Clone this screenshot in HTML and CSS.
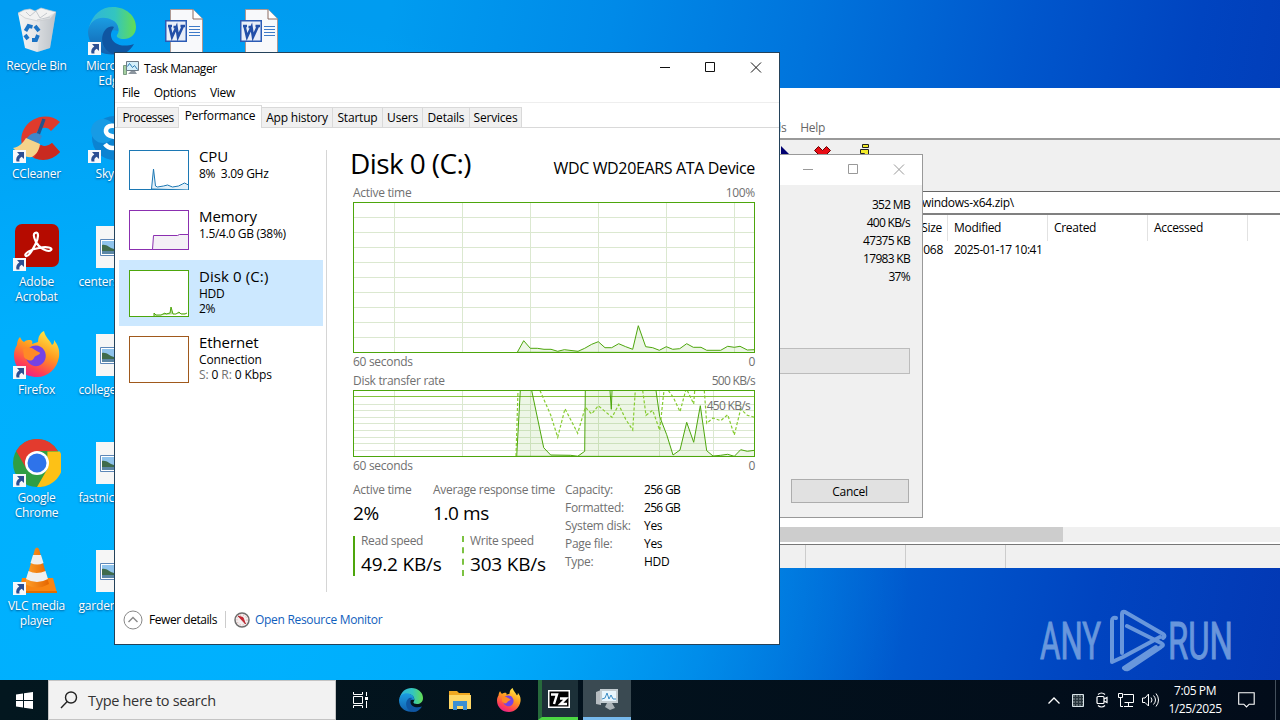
FILE: index.html
```
<!DOCTYPE html>
<html lang="en">
<head>
    <meta charset="utf-8">
    <title>Desktop</title>
    <link rel="stylesheet" href="styles.css">
</head>
<body>
    <svg class="defs" width="0" height="0">
        <defs>
            <linearGradient id="edgeBlue" x1="0" y1="0" x2="0" y2="1"><stop offset="0" stop-color="#1b9de2"/><stop offset="1" stop-color="#1260ae"/></linearGradient>
            <linearGradient id="edgeGreen" x1="0" y1="0" x2="1" y2="0"><stop offset="0" stop-color="#2fb4dc"/><stop offset=".55" stop-color="#33c5c0"/><stop offset="1" stop-color="#63dd52"/></linearGradient>
            <linearGradient id="fire" x1=".8" y1="0" x2=".3" y2="1"><stop offset="0" stop-color="#fff04a"/><stop offset=".45" stop-color="#ff9a1f"/><stop offset=".8" stop-color="#ff3f55"/><stop offset="1" stop-color="#e6218f"/></linearGradient>
            <linearGradient id="bin" x1="0" y1="0" x2="1" y2="0"><stop offset="0" stop-color="#f4f4f4"/><stop offset=".6" stop-color="#e0e2e5"/><stop offset="1" stop-color="#b6bcc4"/></linearGradient>
            <linearGradient id="cone" x1="0" y1="0" x2="1" y2="0"><stop offset="0" stop-color="#ffa12a"/><stop offset="1" stop-color="#e56500"/></linearGradient>
        </defs>
        <symbol id="shortcut" viewBox="0 0 13 13">
            <path d="M0 0h13v13H0z" fill="#f6f8fb"/>
            <path d="M4 2h7v7L8.700 6.800C6.500 8 6 9.500 6.500 11.500H3.500C2.600 8.400 3.800 6 6.300 4.400z" fill="#2c4f93"/>
        </symbol>
        <symbol id="edge" viewBox="0 0 48 48">
            <path d="M1 20C5 7 13 0 25 0c13 0 23 9 23 20 0 8-6 12-12 12-5 0-8-2-7-4 2-3 2-5 1-8-3-9-19-12-29 0z" fill="url(#edgeGreen)"/>
            <path d="M0 24C2 11 15 8 24 13c5 2 7 7 6 11-8-3-15 4-12 12 2 6 6 9 11 11C12 50 0 39 0 24z" fill="url(#edgeBlue)"/>
            <path d="M18 22c-8 9-3 24 11 26 7 0 13-4 17-11-12 4-22 0-23-8-.400-4 2-7 3-9-3-1-6 0-8 2z" fill="#0f56a2"/>
        </symbol>
        <symbol id="firefox" viewBox="0 0 46 46">
            <path d="M3 14c0-3 1-6 3-8 1 2 2 4 4 5 2-2 4-2 6-2 2 0 3 2 2 4l6-2c0-5 2-9 6-11 1 6 6 9 8 14 2-1 2-3 2-5 4 5 6 10 5 17-2 12-11 20-22 20C10 46 0 37 0 24c0-4 1-7 3-10z" fill="url(#fire)"/>
            <path d="M15 17c5-4 12-3 15 2 4 6 1 14-6 16-7 1-12-4-12-10l8-2c3 0 4-2 2-3z" fill="#7542e5"/>
            <path d="M9 18c4-2 8-2 12 1 3 2 5 2 5 3 0 2-5 2-6 5-2 4-7 3-10-1z" fill="#ff8a26"/>
        </symbol>
        <symbol id="word" viewBox="0 0 38 44">
            <path d="M5.500.500h22.500L37.500 10v34h-32z" fill="#f8f9fb" stroke="#b98a78" stroke-width=".8"/>
            <path d="M28 .500V10h9.500" fill="#fff" stroke="#8a6a60"/>
            <path d="M24 17.500h11M24 20.500h11M24 23.500h11M24 26.500h11" stroke="#3f7bc8"/>
            <path d="M0 11h22v22H0z" fill="#2b5bb5"/>
            <path d="M1.500 12.500h19v19h-19z" fill="#e9eef8"/>
            <path d="M4.500 17l2.500 11 4.500-10 1.500 10 5-11M3 17h4M8.500 18h4M15.500 17H20" fill="none" stroke="#234fa8" stroke-width="2.600"/>
        </symbol>
        <symbol id="photo" viewBox="0 0 33 42">
            <path d="M0 0h33v42H0z" fill="#f6f6f6"/>
            <path d="M4.500 13.500h26v16h-26z" fill="#fff" stroke="#5d87b8"/>
            <path d="M6 15h23v13H6z" fill="#8fc3ec"/>
            <path d="M6 19c5-1 7 3 12 4l11-1v3H6z" fill="#3f6b4c"/>
            <path d="M6 25h23v3H6z" fill="#5b86a5"/>
        </symbol>
        <symbol id="taskmgr" viewBox="0 0 16 14">
            <path d="M.500 4.500h3v9h-3z" fill="#a5cfa0" stroke="#7b9c82"/>
            <path d="M3.500.500h12v9h-12z" fill="#d3effb" stroke="#6d7b87"/>
            <path d="M4.500 5.500l2-3 3 4 2-2 3 4" fill="none" stroke="#2b7cb4"/>
            <path d="M8 10h4l2 3H5z" fill="#8c969f"/>
        </symbol>
    </svg>

    <div class="desktop">
        <div class="icons">
            <div class="icon">
                <svg width="48" height="48" viewBox="0 0 48 48">
                    <path d="M5 6l38-1-6 36-13 4-12-4z" fill="url(#bin)"/>
                    <path d="M5 6l6-3 6-1 5 2 6-3 7 2 8 2-6 7-12 2-13-3z" fill="#f2f2f2" stroke="#c5c8cc" stroke-width=".7"/>
                    <path d="M13 5l4 4 6-5 4 7 7-5M24 13l13-3" fill="none" stroke="#b9bec4" stroke-width=".8"/>
                    <path d="M27 14l16-9-6 36-12 4z" fill="#c5c9cf" opacity=".45"/>
                    <path d="M12.500 24l3-5 4 1M22 19l4 5M25 28l-2 5h-4M15 32l-3-4" fill="none" stroke="#1b73c5" stroke-width="3.800"/>
                </svg>
                <span>Recycle Bin</span>
            </div>
            <div class="icon">
                <svg width="48" height="48"><use href="#edge"/></svg>
                <svg class="arrow" width="13" height="13"><use href="#shortcut"/></svg>
                <span>Microsoft Edge</span>
            </div>
            <div class="icon word"><svg width="38" height="44"><use href="#word"/></svg></div>
            <div class="icon word"><svg width="38" height="44"><use href="#word"/></svg></div>

            <div class="icon">
                <svg width="48" height="48" viewBox="0 0 48 48">
                    <path d="M47 7C36-3 18 1 11 14c-7 13 0 28 14 30 8 1 16-1 22-7l-8-9c-5 5-13 4-15-2-3-6 0-12 6-13 3-1 6 0 8 3z" fill="#df3b2c"/>
                    <path d="M47 37l-8-9c-4 3-8 4-11 2l-7 13c9 4 19 2 26-6z" fill="#c92a20"/>
                    <path d="M31 4l-6 16" stroke="#25548c" stroke-width="3.500"/>
                    <path d="M15 22c4-5 10-5 14-1l-4 8-13-4z" fill="#3e87cb"/>
                    <path d="M13 23l14 6c-1 6-3 10-8 13-6 1-13-3-19-9 6-1 10-5 13-10z" fill="#f5d48b"/>
                </svg>
                <svg class="arrow" width="13" height="13"><use href="#shortcut"/></svg>
                <span>CCleaner</span>
            </div>
            <div class="icon">
                <svg width="48" height="48" viewBox="0 0 48 48"><circle cx="26" cy="23" r="22" fill="#0b83d2"/><circle cx="15" cy="16" r="12" fill="#179be5"/><path d="M32 14c-4-5-13-4-14 1-1 9 15 4 14 13-1 6-11 7-15 1" fill="none" stroke="#fff" stroke-width="4.500"/></svg>
                <svg class="arrow" width="13" height="13"><use href="#shortcut"/></svg>
                <span>Skype</span>
            </div>
            <i></i><i></i>

            <div class="icon">
                <svg width="48" height="48" viewBox="0 0 48 48">
                    <rect x="2" y="1" width="44" height="43" rx="7" fill="#b50b00"/>
                    <path d="M22 10c4-2 4 5 0 12-3 6-7 12-9 11-3-2 5-7 13-8 8-2 14 0 12 2-3 3-12-2-15-8-2-4-3-8-1-9z" fill="none" stroke="#fff" stroke-width="2.200"/>
                </svg>
                <svg class="arrow" width="13" height="13"><use href="#shortcut"/></svg>
                <span>Adobe Acrobat</span>
            </div>
            <div class="icon photo"><svg width="33" height="42"><use href="#photo"/></svg><span>centers.jpg</span></div>
            <i></i><i></i>

            <div class="icon">
                <svg width="48" height="48" viewBox="-1 0 48 48"><use href="#firefox" width="46" height="46"/></svg>
                <svg class="arrow" width="13" height="13"><use href="#shortcut"/></svg>
                <span>Firefox</span>
            </div>
            <div class="icon photo"><svg width="33" height="42"><use href="#photo"/></svg><span>college.jpg</span></div>
            <i></i><i></i>

            <div class="icon">
                <svg width="48" height="48" viewBox="0 0 48 48">
                    <circle cx="24" cy="24" r="24" fill="#2f9e44"/>
                    <path d="M3.200 12A24 24 0 0 1 44.800 12H24v12l-10.400 6z" fill="#e33b2e"/>
                    <path d="M46.800 12.500A24 24 0 0 1 24 48l10.400-18V12.500z" fill="#fdc116"/>
                    <circle cx="24" cy="24" r="12" fill="#fff"/>
                    <circle cx="24" cy="24" r="9.500" fill="#2e73ea"/>
                </svg>
                <svg class="arrow" width="13" height="13"><use href="#shortcut"/></svg>
                <span>Google Chrome</span>
            </div>
            <div class="icon photo"><svg width="33" height="42"><use href="#photo"/></svg><span>fastnice.jpg</span></div>
            <i></i><i></i>

            <div class="icon">
                <svg width="48" height="48" viewBox="0 0 48 48">
                    <path d="M9 31h31l4 15H6z" fill="#f98512"/>
                    <path d="M6 44h38v2H6z" fill="#e06d00"/>
                    <path d="M22 2q2-3 4 0l10 35q-12 7-24 0z" fill="url(#cone)"/>
                    <path d="M20 8h8l2.500 8q-6 3-13 0zM15.500 24q8 4 17 0l2.500 8q-11 6-22 0z" fill="#efefef"/>
                </svg>
                <svg class="arrow" width="13" height="13"><use href="#shortcut"/></svg>
                <span>VLC media player</span>
            </div>
            <div class="icon photo"><svg width="33" height="42"><use href="#photo"/></svg><span>garden.jpg</span></div>
        </div>

        <svg class="watermark" width="200" height="64" viewBox="0 0 200 64">
            <g class="watermark-text">
                <text x="3" y="50" textLength="61" lengthAdjust="spacingAndGlyphs">ANY</text>
                <text x="131" y="50" textLength="65" lengthAdjust="spacingAndGlyphs">RUN</text>
            </g>
            <g fill="none" stroke="#7ba6e2" stroke-width="4" stroke-linejoin="round" stroke-linecap="round">
                <path d="M79 9q-4-1-4 3v41l11-5 37-20"/>
                <path d="M85 44V5q0-3 3-2l38 22q3 2 0 4"/>
                <path d="M90 17l34 17q4 2 0 4L91 60q-2 1-4-1l32-21"/>
            </g>
        </svg>

        <div class="window zip">
            <div class="zip-menu"><span>Tools</span><span>Help</span></div>
            <div class="zip-toolbar">
                <svg width="140" height="24" viewBox="0 0 140 24">
                    <path d="M41 2l9 9v8h-9z" fill="#000070"/>
                    <path d="M74.500 6.500l4-4 4 4 4-4 4 4-8 8z" fill="#e80c14" stroke="#600" />
                    <path d="M122.500.500h6v3h-6zM120.500 5.500h8v9h-4v-5h-4z" fill="#f2ea2a" stroke="#222"/>
                </svg>
            </div>
            <div class="zip-path"><span>windows-x64.zip\</span></div>
            <div class="zip-list">
                <div class="zip-row zip-head"><span>Size</span><span>Modified</span><span>Created</span><span>Accessed</span></div>
                <div class="zip-row"><span>068</span><span class="date">2025-01-17 10:41</span><span></span><span></span></div>
            </div>
            <div class="scrollbar"><div></div></div>
            <div class="zip-status"><span></span><span></span><span></span></div>
        </div>

        <div class="window dialog">
            <div class="dialog-title">
                <svg width="102" height="11" viewBox="0 0 102 11" fill="none" stroke="#999"><path d="M0 5.500h10M45.500.500h9v9h-9zM91 .500l10 10M101 .500l-10 10"/></svg>
            </div>
            <div class="dialog-values">
                <span>352 MB</span><span>400 KB/s</span><span>47375 KB</span><span>17983 KB</span><span>37%</span>
            </div>
            <div class="progress"></div>
            <button class="cancel">Cancel</button>
        </div>

        <div class="window task-manager">
            <div class="title-bar">
                <svg width="16" height="14"><use href="#taskmgr"/></svg>
                <span>Task Manager</span>
                <svg class="controls" width="102" height="11" viewBox="0 0 102 11" fill="none" stroke="#111"><path d="M0 5.500h10M45.500.500h9v9h-9zM91 .500l10 10M101 .500l-10 10"/></svg>
            </div>
            <div class="menu"><span>File</span><span>Options</span><span>View</span></div>
            <div class="tabs">
                <div class="tab processes">Processes</div>
                <div class="tab performance active">Performance</div>
                <div class="tab history">App history</div>
                <div class="tab startup">Startup</div>
                <div class="tab users">Users</div>
                <div class="tab details">Details</div>
                <div class="tab services">Services</div>
            </div>
            <div class="content">
                <div class="sidebar">
                    <div class="resource">
                        <svg width="60" height="40"><rect x=".5" y=".5" width="59" height="39" fill="#fff" stroke="#1c78b4"/><path d="M22.500 39L24.500 19l2 17 2 1 6-1 4-1 5 2 6-1 4-2 2-1 2 1 2 1v5z" fill="#e4f1f9" stroke="#1c78b4"/></svg>
                        <div class="resource-text"><b>CPU</b><span>8%&nbsp; 3.09 GHz</span></div>
                    </div>
                    <div class="resource">
                        <svg width="60" height="40"><rect x=".5" y=".5" width="59" height="39" fill="#fff" stroke="#8b2fb0"/><path d="M23.500 39.500l1-14h24l2-1h9v15z" fill="#f4f0f6" stroke="#8b2fb0"/></svg>
                        <div class="resource-text"><b>Memory</b><span>1.5/4.0 GB (38%)</span></div>
                    </div>
                    <div class="resource selected">
                        <svg width="60" height="47"><rect x=".5" y=".5" width="59" height="46" fill="#fff" stroke="#4da60c"/><path d="M25 46v-3l2 2h5l4-2 1 1 4-1 1-6 2 7h3l3-2 2 2h4l2-1" fill="#b7dc9d" stroke="#4da60c"/></svg>
                        <div class="resource-text"><b class="wide">Disk 0 (C:)</b><span>HDD</span><span>2%</span></div>
                    </div>
                    <div class="resource">
                        <svg width="60" height="47"><rect x=".5" y=".5" width="59" height="46" fill="#fff" stroke="#a0591c"/></svg>
                        <div class="resource-text"><b>Ethernet</b><span class="wide">Connection</span><span class="wide"><em>S:</em> 0 <em>R:</em> 0 Kbps</span></div>
                    </div>
                </div>

                <div class="panel">
                    <div class="panel-title"><h1>Disk 0 (C:)</h1><span>WDC WD20EARS ATA Device</span></div>
                    <div class="label-row"><span>Active time</span><span>100%</span></div>
                    <svg class="chart" width="402" height="151">
                        <path class="grid" d="M41.500 0v151M109.500 0v151M177.500 0v151M245.500 0v151M313.500 0v151M381.500 0v151M0 15.500h402M0 30.500h402M0 45.500h402M0 60.500h402M0 75.500h402M0 90.500h402M0 105.500h402M0 120.500h402M0 135.500h402"/>
                        <path class="line fill" d="M164.300 150.300L170.700 138.700 177.300 146.300 184.300 146.300 191 147.300 198 147.300 204.700 149.300 211.300 147.700 225 149.300 231.700 146.300 238.700 142.300 245.300 139.700 252 145.700 258.700 145.700 265.700 141.700 272.700 144.700 279.700 147.300 285.300 123.700 292.700 144.700 299.700 145.700 306.300 148.300 313.300 144.700 319.700 147.300 326.700 146.700 333.700 141.700 340.300 145.300 348 145.300 353.700 148.300 367.700 148.300 374.700 144.300 381.300 145.300 387 144.300 394.300 148 401.500 147.700V150.500z"/>
                        <rect class="frame" x=".5" y=".5" width="401" height="150"/>
                    </svg>
                    <div class="label-row seconds"><span>60 seconds</span><span>0</span></div>
                    <div class="label-row"><span>Disk transfer rate</span><span class="tight">500 KB/s</span></div>
                    <div class="transfer">
                        <svg class="chart" width="402" height="67">
                            <path class="grid" d="M41.500 0v67M109.500 0v67M177.500 0v67M245.500 0v67M306.500 0v67M360.500 0v67M0 14.500h402M0 20.500h402M0 27.500h402M0 33.500h402M0 40.500h402M0 47.500h402M0 53.500h402M0 60.500h402"/>
                            <path class="limit" d="M0 6.500h402"/>
                            <path class="line fill" d="M163.700 66.300L167.300 .5H178.700L190.700 57.700 197.700 65 217.700 65.300 224.700 66.300 231.700 61.300 232.300 .5H257L258.300 19.300 259 .5H303L306.700 26.700 313.700 44.700 320 65 327 60 333.700 32.300 340.700 52.300 347.300 15.700 353.700 60.700 360 66 367.700 65.300 374.700 64.300 381.300 66.300 387.700 59.700 394.300 61.300 401.500 60.300V66.500z"/>
                            <path class="dashed" d="M163 66L165 .5M187 .5L197.700 25 204.700 47.300 212 18.700 224.700 43.300 232.300 17.300 238.700 24 245.300 15.700 259 27.300 265.700 14.700 272.700 29.300 279.700 40 282.300 .5M289.700 .5L293 25.300 299.700 20.300 306.700 40.300 311 .5M315.300 .5L320.300 7.300 327 21.700 332.700 .5M334.300 .5L340.700 14 341.700 .5M351.300 .5L353.700 33.300 360 28 367.700 30.700 374.700 24.700 381.300 45 387.700 19 394.300 25.300 401.500 27.300"/>
                            <rect class="frame" x=".5" y=".5" width="401" height="66"/>
                        </svg>
                        <span class="limit-label tight">450 KB/s</span>
                    </div>
                    <div class="label-row"><span>60 seconds</span><span>0</span></div>
                    <div class="stats">
                        <div class="stat-grid">
                            <div class="stat"><span>Active time</span><b>2%</b></div>
                            <div class="stat"><span>Average response time</span><b>1.0 ms</b></div>
                        </div>
                        <div class="speeds">
                            <div class="stat read"><span>Read speed</span><b>49.2 KB/s</b></div>
                            <div class="stat write"><span>Write speed</span><b>303 KB/s</b></div>
                        </div>
                        <div class="properties">
                            <span>Capacity:</span><b class="tight">256 GB</b>
                            <span>Formatted:</span><b class="tight">256 GB</b>
                            <span>System disk:</span><b>Yes</b>
                            <span>Page file:</span><b>Yes</b>
                            <span>Type:</span><b>HDD</b>
                        </div>
                    </div>
                </div>
            </div>
            <div class="footer">
                <svg width="20" height="20" fill="none"><circle cx="10" cy="10" r="9" stroke="#888"/><path d="M5.500 12l4.500-4.500 4.500 4.500" stroke="#888" stroke-width="1.400"/></svg>
                <span class="fewer">Fewer details</span>
                <svg width="16" height="16"><circle cx="8" cy="8" r="7" fill="#f4eeee" stroke="#6e6e6e" stroke-width="1.500"/><circle cx="8" cy="8" r="5" fill="none" stroke="#d8a0a0" stroke-dasharray="1 2"/><path d="M4 4l7.500 8L9 5.500z" fill="#ce2430" stroke="#b2202a" stroke-width=".8"/></svg>
                <a href="#">Open Resource Monitor</a>
            </div>
        </div>
    </div>

    <div class="taskbar">
        <div class="start"><svg width="17" height="17" viewBox="0 0 17 17" fill="#fff"><path d="M0 2.500l7-1V8H0zM8 1.300L17 0v8H8zM0 9h7v6.500l-7-1zM8 9h9v8l-9-1.300z"/></svg></div>
        <div class="search">
            <svg width="18" height="18" fill="none" stroke="#222" stroke-width="1.400"><circle cx="11" cy="6.500" r="5.500"/><path d="M7.200 10.500L1 17"/></svg>
            <span>Type here to search</span>
        </div>
        <div class="task view"><svg width="17" height="16" fill="none" stroke="#fff"><path d="M1.500 0v2.500h9V0M1.500 16v-2.500h9V16M1.500 4.500h9v7h-9zM14.500 0v4M14.500 9v7"/><path d="M13 5h3v3h-3z" fill="#fff" stroke="none"/></svg></div>
        <div class="task"><svg width="24" height="24"><use href="#edge"/></svg></div>
        <div class="task"><svg width="22" height="20"><path d="M0 1h8l2 2h11v15H0z" fill="#f0a821"/><path d="M0 5h22v14H0z" fill="#ffd766"/><path d="M4 20v-9h14v9h-4v-4H8v4z" fill="#3d8fd3"/></svg></div>
        <div class="task"><svg width="24" height="24"><use href="#firefox"/></svg></div>
        <div class="task seven"><svg width="22" height="18"><path d="M0 0h22v18H0z" fill="#fff"/><path d="M1.500 1.500h19v15h-19z" fill="#000"/><path d="M3 4.500h6L6 14M12 8.500h6l-5.500 5.500H19" fill="none" stroke="#fff" stroke-width="2.400"/></svg></div>
        <div class="task current"><svg width="24" height="22"><path d="M1 4l5-2v15l-5-1z" fill="#b5bcc0"/><path d="M5 1h18v14H5z" fill="#c3ccd0"/><path d="M7 3h14v10H7z" fill="#e9f6fd"/><path d="M7 11l3-1 2-5 2 6 2-4 2 4h3" fill="none" stroke="#3b8cc4"/><path d="M12 15h5l3 5-5 2-5-3z" fill="#a9b2b6"/></svg></div>
        <div class="tray">
            <svg width="12" height="7" fill="none" stroke="#fff" stroke-width="1.300"><path d="M.500 6.500L6 1l5.500 5.500"/></svg>
            <svg width="12" height="13"><path d="M.500.500h11v12H.500z" fill="#5e6a70" stroke="#d9e4e8"/><path d="M3.500 1v11M6.500 1v11M9.500 1v11M1 3.500h10M1 6.500h10M1 9.500h10" stroke="#27343b"/></svg>
            <svg width="12" height="16" fill="none" stroke="#fff" stroke-width="1.200"><rect x="1" y="4.500" width="7" height="7" rx="1"/><path d="M8 7l3-1.500v5L8 9M2 2.500Q5.500-.5 9 2.500M2 13.500q3.500 3 7 0"/></svg>
            <svg width="17" height="14" fill="none" stroke="#fff"><path d="M5.500 1.500h10v8h-9M10.500 10v3M6 13.500h9M.500.500h4v4h-4zM2.500 5v8.500H5"/></svg>
            <svg width="17" height="14" fill="none" stroke="#fff"><path d="M.500 5v4.500H3l3.500 3.500V1L3 5zM9 4.500q2 2.500 0 5M11.500 2.500q4 4.500 0 9M14 .500q5 6.500 0 13"/></svg>
        </div>
        <div class="clock"><span>7:05 PM</span><span>1/25/2025</span></div>
        <svg class="notice" width="17" height="16" fill="none" stroke="#fff" stroke-width="1.100"><path d="M.700.700h15.500v11.500h-5L8.500 15l-2.700-2.800H.700z"/></svg>
        <div class="show-desktop"></div>
    </div>
</body>
</html>
```

FILE: styles.css
```
* {
    box-sizing: border-box;
}

body {
    margin: 0;
    width: 1280px;
    height: 720px;
    overflow: hidden;
    font-family: "Open Sans", "Noto Sans", sans-serif;
    font-size: 12px;
    letter-spacing: -0.3px;
    color: #000;
}

svg {
    display: block;
    flex: none;
}

.defs {
    position: absolute;
}

.tight {
    letter-spacing: -0.7px;
}

.wide {
    letter-spacing: -0.1px;
}

.desktop {
    position: relative;
    height: 680px;
    overflow: hidden;
    background:
        radial-gradient(ellipse 760px 560px at 150px 560px, #00b2ff 0%, rgba(0, 178, 255, 0.85) 45%, rgba(0, 170, 250, 0) 100%),
        linear-gradient(100deg, #009cf2 0%, #009cf0 28%, #008ae8 44%, #0074dc 58%, #0056cc 74%, #0044c0 86%, #0338b4 100%);
}

/* desktop icons */
.icons {
    display: grid;
    grid-template-columns: repeat(4, 75px);
    grid-auto-rows: 108px;
    margin-left: -1px;
}

.icon {
    position: relative;
    display: flex;
    flex-direction: column;
    align-items: center;
    padding-top: 7px;
    color: #fff;
    text-align: center;
    line-height: 15px;
    text-shadow: 0 1px 2px rgba(0, 40, 90, 0.7);
}

.icon span {
    width: 72px;
    margin-top: 3px;
    letter-spacing: -0.2px;
}

.icon .arrow {
    position: absolute;
    left: 14px;
    top: 42px;
}

.icon.word {
    padding-top: 9px;
    padding-right: 6px;
}

.icon.photo {
    padding-top: 10px;
}

.icon.photo svg {
    margin-left: 2px;
}

.icon.photo span {
    margin-top: 6px;
    padding-left: 3px;
    text-align: left;
}

.watermark {
    position: absolute;
    left: 1037px;
    top: 609px;
    opacity: 0.85;
}

.watermark-text {
    font-family: "Liberation Sans Narrow", "Roboto", sans-serif;
    font-size: 51px;
    letter-spacing: 0;
    fill: #7ba6e2;
    stroke: #7ba6e2;
    stroke-width: 1px;
}

.window {
    position: absolute;
    display: flex;
    flex-direction: column;
}

/* archive window */
.zip {
    left: 740px;
    top: 88px;
    width: 540px;
    height: 480px;
    background: #fff;
}

.zip-menu {
    display: flex;
    gap: 14px;
    height: 50px;
    padding: 31px 0 0 18px;
    color: #666;
    line-height: 18px;
}

.zip-toolbar {
    height: 53px;
    padding-top: 4px;
    border-top: 2px solid #999;
    background: #f0f0f0;
}

.zip-path {
    height: 24px;
    padding-left: 182px;
    border-top: 1px solid #666;
    border-bottom: 2px solid #808080;
    line-height: 22px;
}

.zip-list {
    flex: 1;
}

.zip-row {
    display: grid;
    grid-template-columns: 208px 100px 100px 100px;
    height: 20px;
    line-height: 19px;
}

.zip-head {
    height: 25px;
    line-height: 26px;
}

.zip-row span {
    padding-left: 6px;
    white-space: nowrap;
}

.zip-row span:first-child {
    padding-right: 5px;
    text-align: right;
}

.zip-row .date {
    letter-spacing: -0.5px;
}

.zip-head span {
    border-right: 1px solid #e2e2e2;
}

.scrollbar {
    height: 15px;
    margin-bottom: 2px;
    background: #f0f0f0;
}

.scrollbar div {
    width: 323px;
    height: 15px;
    background: #cdcdcd;
}

.zip-status {
    display: flex;
    height: 24px;
    border-top: 1px solid #777;
    background: #f0f0f0;
}

.zip-status span {
    width: 100px;
    border-right: 1px solid #ccc;
}

.zip-status span:first-child {
    width: 66px;
}

/* progress dialog */
.dialog {
    left: 700px;
    top: 154px;
    width: 223px;
    height: 364px;
    border: 1px solid #999;
    background: #f0f0f0;
}

.dialog-title {
    height: 30px;
    padding: 9px 0 0 102px;
    background: #fff;
}

.dialog-values {
    display: flex;
    flex-direction: column;
    padding: 11px 12px 0 0;
    text-align: right;
    line-height: 18px;
    letter-spacing: -0.7px;
}

.progress {
    height: 26px;
    margin: 62px 12px 0 0;
    border: 1px solid #bcbcbc;
    background: #e6e6e6;
}

.cancel {
    width: 118px;
    height: 24px;
    margin: 105px 0 0 90px;
    padding: 0;
    border: 1px solid #adadad;
    background: #e1e1e1;
    font: inherit;
    letter-spacing: inherit;
}

/* task manager */
.task-manager {
    left: 114px;
    top: 52px;
    width: 666px;
    height: 593px;
    border: 1px solid #24425a;
    background: #fff;
}

.title-bar {
    display: flex;
    align-items: center;
    gap: 5px;
    height: 30px;
    padding: 0 17px 0 8px;
}

.title-bar span {
    letter-spacing: -0.45px;
}

.controls {
    margin: 0 0 2px auto;
}

.menu {
    display: flex;
    gap: 14px;
    height: 20px;
    padding-left: 7px;
    line-height: 20px;
    border-bottom: 1px solid #eee;
}

.tabs {
    display: flex;
    align-items: flex-end;
    height: 25px;
    padding-left: 2px;
    border-bottom: 1px solid #d9d9d9;
}

.tab {
    height: 20px;
    border: 1px solid #d9d9d9;
    border-left: 0;
    border-bottom: 0;
    background: #f0f0f0;
    text-align: center;
    line-height: 19px;
    letter-spacing: -0.2px;
    white-space: nowrap;
}

.tab.active {
    height: 23px;
    margin-bottom: -1px;
    background: #fff;
}

.processes {
    width: 62px;
    border-left: 1px solid #d9d9d9;
    letter-spacing: -0.5px;
}

.performance {
    width: 83px;
}

.history {
    width: 71px;
}

.startup {
    width: 50px;
}

.users {
    width: 40px;
}

.details {
    width: 47px;
}

.services {
    width: 52px;
}

.content {
    display: flex;
    flex: 1;
}

.sidebar {
    width: 212px;
    height: 442px;
    margin-top: 22px;
    border-right: 1px solid #d5d5d5;
}

.resource {
    display: flex;
    gap: 10px;
    width: 204px;
    height: 60px;
    margin-left: 4px;
    padding: 10px;
}

.resource:first-child {
    margin-top: -10px;
}

.resource:nth-child(n+3) {
    height: 66px;
}

.resource.selected {
    background: #cce8ff;
}

.resource-text {
    display: flex;
    flex-direction: column;
    margin-top: -4px;
    line-height: 15px;
    white-space: nowrap;
}

.resource-text b {
    font-size: 15px;
    font-weight: 400;
    line-height: 20px;
    letter-spacing: -0.1px;
}

.resource-text b.wide {
    letter-spacing: 0.1px;
}

.resource-text em {
    color: #707070;
    font-style: normal;
}

.panel {
    width: 404px;
    padding: 17px 0 0 0;
    margin-left: 26px;
}

.panel-title {
    display: flex;
    justify-content: space-between;
    align-items: baseline;
    width: 402px;
    height: 39px;
    white-space: nowrap;
}

.panel-title h1 {
    margin: 0 0 0 -3px;
    font-size: 28px;
    font-weight: 400;
    line-height: 36px;
    letter-spacing: -0.6px;
}

.panel-title span {
    font-size: 16px;
    letter-spacing: -0.35px;
}

.label-row {
    display: flex;
    justify-content: space-between;
    width: 402px;
    height: 18px;
    color: #707070;
    line-height: 17px;
}

.label-row.seconds {
    height: 19px;
}

.grid {
    fill: none;
    stroke: #dbe8d0;
}

.line {
    stroke: #4da60c;
}

.fill {
    fill: rgba(77, 166, 12, 0.1);
}

.dashed {
    fill: none;
    stroke: #86cc30;
    stroke-width: 1.2;
    stroke-dasharray: 3 2;
}

.limit {
    stroke: #86c440;
}

.frame {
    fill: none;
    stroke: #4da60c;
}

.transfer {
    position: relative;
}

.limit-label {
    position: absolute;
    right: 7px;
    top: 8px;
    color: #707070;
    line-height: 16px;
}

.stats {
    display: grid;
    grid-template-columns: 212px 130px;
    grid-template-rows: 51px 44px;
    margin-top: 6px;
    white-space: nowrap;
}

.stat-grid,
.speeds {
    display: flex;
}

.stat {
    display: flex;
    flex-direction: column;
    color: #707070;
    line-height: 18px;
}

.stat-grid .stat:first-child {
    width: 80px;
}

.stat b {
    color: #000;
    font-size: 19px;
    font-weight: 400;
    line-height: 28px;
    letter-spacing: -0.2px;
}

.stat-grid .stat b {
    letter-spacing: -0.4px;
}

.speeds .stat {
    height: 40px;
    padding-left: 6px;
    border-left: 2px solid #4da60c;
    line-height: 10px;
    margin-top: 4px;
}

.speeds .stat b {
    line-height: 36px;
}

.speeds .read {
    width: 109px;
}

.speeds .write {
    border-left: 2px dashed #7cc242;
}

.properties {
    grid-column: 2;
    grid-row: 1 / 3;
    display: grid;
    grid-template-columns: 79px auto;
    grid-auto-rows: 18px;
    align-content: start;
    color: #707070;
    line-height: 18px;
}

.properties b {
    color: #000;
    font-weight: 400;
}

.footer {
    display: flex;
    align-items: center;
    height: 49px;
    padding-left: 8px;
}

.fewer {
    width: 77px;
    margin: 0 8px 0 6px;
    padding-right: 8px;
    border-right: 1px solid #ccc;
    letter-spacing: -0.45px;
    white-space: nowrap;
}

.footer a {
    margin-left: 5px;
    color: #1160bd;
    text-decoration: none;
}

/* taskbar */
.taskbar {
    display: flex;
    align-items: center;
    height: 40px;
    background: linear-gradient(90deg, #03171f, #020c1a);
    color: #fff;
}

.start {
    display: flex;
    justify-content: center;
    width: 48px;
}

.search {
    display: flex;
    align-items: center;
    gap: 10px;
    width: 288px;
    height: 40px;
    padding-left: 11px;
    border: 1px solid #c4c4c4;
    background: #f2f2f2;
    color: #333;
    font-size: 14.5px;
}

.task {
    display: flex;
    align-items: center;
    justify-content: center;
    width: 49px;
    height: 40px;
}

.task.view {
    width: 50px;
    padding-right: 1px;
}

.task.seven {
    width: 40px;
    margin-left: 5px;
    padding-right: 3px;
    border-left: 4px solid #276a3c;
    border-bottom: 3px solid #4cd743;
    background: #1c3038;
}

.task.current {
    width: 48px;
    margin-left: 5px;
    border-bottom: 3px solid #76b9ed;
    background: #3a4a52;
}

.tray {
    display: grid;
    grid-template-columns: repeat(5, 24px);
    align-items: center;
    justify-items: center;
    margin-left: auto;
}

.clock {
    display: flex;
    flex-direction: column;
    width: 66px;
    text-align: center;
    line-height: 18px;
    letter-spacing: -0.4px;
}

.notice {
    margin: 0 20px 0 10px;
}

.show-desktop {
    width: 5px;
    height: 40px;
    border-left: 1px solid #44505c;
}
```
